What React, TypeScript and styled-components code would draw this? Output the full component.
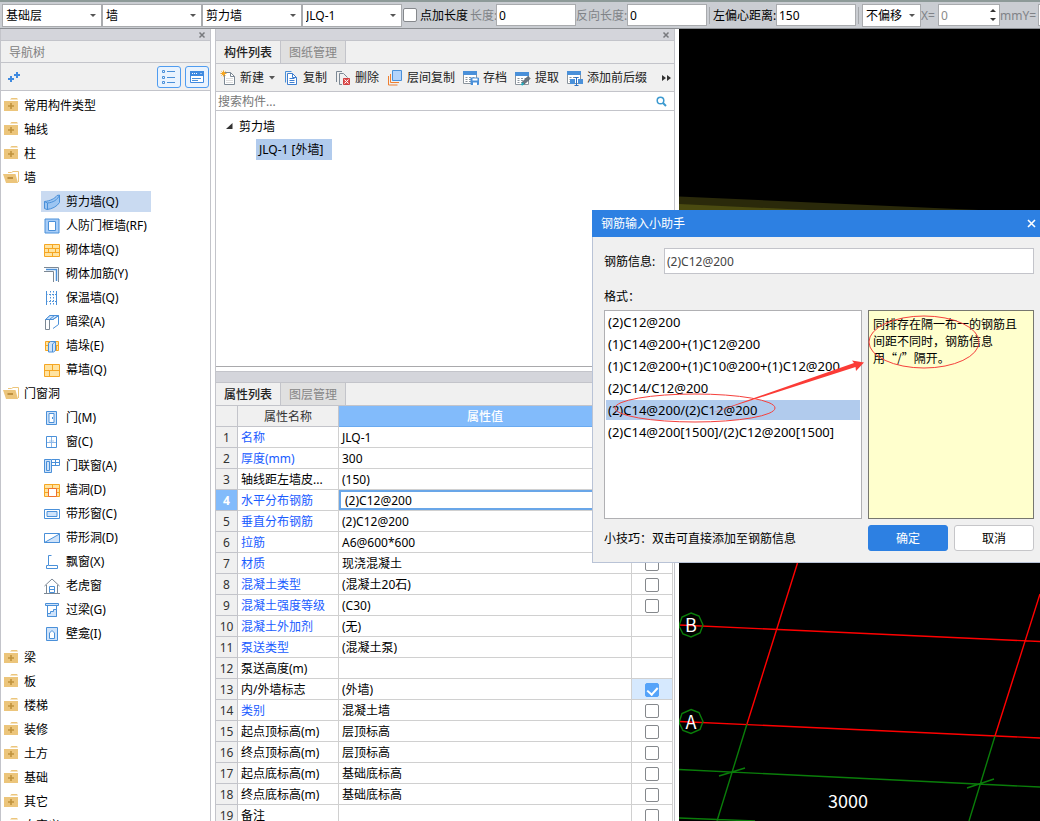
import React from 'react';
import styled, { createGlobalStyle } from 'styled-components';

const line = '#c3c4ca';
const blue = '#4a90d9';
const pale = '#cfe3fa';
const gold = '#f5a623';
const sand = '#ffe3a0';

const Global = createGlobalStyle`
  * { box-sizing: border-box; }
  body {
    margin: 0;
    background: #fff;
    color: #000;
    font: 12px/17px "Noto Sans", "Noto Sans CJK SC", sans-serif;
  }
  button, input, select { font: inherit; color: inherit; margin: 0; }
  ul { list-style: none; margin: 0; padding: 0; }
`;

/* ---------- page frame ---------- */

const Page = styled.div`
  position: relative;
  display: flex;
  flex-direction: column;
  height: 100vh;
  overflow: hidden;
`;

const TopBar = styled.div`
  flex: none;
  display: flex;
  align-items: center;
  height: 29px;
  padding-left: 2px;
  background: #cacdd2;
  border-top: 2px solid #8d9a98;
  border-bottom: 1px solid #8b8e92;
  overflow: hidden;
  white-space: nowrap;
`;

const Main = styled.div`
  flex: 1;
  min-height: 0;
  display: flex;
  gap: 4px;
`;

/* ---------- top bar controls ---------- */

const SelectBox = styled.div<{ $w: number }>`
  position: relative;
  flex: none;
  width: ${p => p.$w}px;
  &::after {
    content: '';
    position: absolute;
    right: 6px;
    top: 10px;
    border: 3px solid transparent;
    border-top-color: #555;
    pointer-events: none;
  }
  select {
    appearance: none;
    display: block;
    width: 100%;
    height: 23px;
    padding: 0 3px;
    border: 1px solid #a9abae;
    border-radius: 0;
    background: #fff;
  }
`;

const Drop = ({ w, value, label }: { w: number; value: string; label: string }) => (
  <SelectBox $w={w}>
    <select aria-label={label} defaultValue={value}><option>{value}</option></select>
  </SelectBox>
);

const Field = styled.input<{ $w: number; $dim?: boolean }>`
  flex: none;
  display: block;
  width: ${p => p.$w}px;
  height: 22px;
  padding: 0 2px;
  border: 1px solid #a9abae;
  background: #fff;
  color: ${p => (p.$dim ? '#8a8a8a' : '#000')};
`;

const BarLabel = styled.label<{ $w: number; $dim?: boolean }>`
  flex: none;
  width: ${p => p.$w}px;
  color: ${p => (p.$dim ? '#808387' : '#000')};
`;

const CheckLabel = styled.label`
  flex: none;
  display: flex;
  align-items: center;
  gap: 3px;
  width: 68px;
  padding-left: 1px;
`;

const Divider = styled.span`
  flex: none;
  width: 1px;
  height: 17px;
  margin: 0 3px 0 2px;
  background: #a5a8ac;
`;

const Spin = styled.span`
  position: relative;
  flex: none;
  &::before, &::after {
    content: '';
    position: absolute;
    right: 4px;
    border: 3px solid transparent;
  }
  &::before { top: 2px; border-bottom-color: #333; }
  &::after { bottom: 2px; border-top-color: #333; }
`;

const Check = styled.input`
  appearance: none;
  flex: none;
  display: block;
  width: 14px;
  height: 14px;
  border: 1px solid #85888c;
  border-radius: 2px;
  background: #fff;
  &:checked { background: #55a3f9; border-color: #55a3f9; }
  &:checked::after {
    content: '';
    display: block;
    width: 5px;
    height: 8px;
    margin: 1px auto 0;
    border: solid #fff;
    border-width: 0 2px 2px 0;
    transform: rotate(42deg);
  }
`;

/* ---------- shared panel parts ---------- */

const Strip = styled.div`
  flex: none;
  display: flex;
  justify-content: flex-end;
  align-items: center;
  height: 12px;
  padding-right: 4px;
  background: #d4d5db;
  border-bottom: 1px solid ${line};
`;

const StripClose = styled.button`
  display: flex;
  padding: 0;
  border: 0;
  background: none;
`;

const ClosableStrip = () => (
  <Strip>
    <StripClose aria-label="关闭面板">
      <svg width="8" height="8" viewBox="0 0 8 8" stroke="#77797d" strokeWidth="1.500"><path d="M1.500 1.500l5 5M6.500 1.500l-5 5" /></svg>
    </StripClose>
  </Strip>
);

const Tabs = styled.div`
  flex: none;
  display: flex;
  height: 23px;
  background: #f0f0f0;
  border-bottom: 1px solid ${line};
`;

const Tab = styled.button<{ $on?: boolean }>`
  width: 65px;
  padding: 0;
  border: 0;
  border-right: 1px solid ${line};
  background: ${p => (p.$on ? '#f0f0f0' : '#e0e0e0')};
  color: ${p => (p.$on ? '#222' : '#868686')};
  font-weight: ${p => (p.$on ? 500 : 400)};
`;

/* ---------- navigation tree ---------- */

const Nav = styled.aside`
  flex: none;
  display: flex;
  flex-direction: column;
  width: 211px;
  border: solid ${line};
  border-width: 0 1px;
  overflow: hidden;
`;

const NavTitle = styled.div`
  flex: none;
  height: 22px;
  padding: 3px 8px;
  background: #f0f0f0;
  border-bottom: 1px solid ${line};
  color: #808080;
`;

const NavTools = styled.div`
  flex: none;
  display: flex;
  align-items: center;
  gap: 4px;
  height: 28px;
  padding: 0 1px 0 6px;
  background: #f0f0f0;
  border-bottom: 1px solid ${line};
`;

const AddButton = styled.button`
  display: flex;
  margin-right: auto;
  padding: 0;
  border: 0;
  background: none;
`;

const ViewButton = styled.button`
  display: flex;
  align-items: center;
  justify-content: center;
  width: 24px;
  height: 22px;
  padding: 0;
  border: 1px solid #4f9cf0;
  border-radius: 3px;
  background: #e9f3fe;
`;

const NavList = styled.ul`
  display: flex;
  flex-direction: column;
  padding-top: 2px;
`;

const NavGroup = styled.li`
  flex: none;
  display: flex;
  align-items: center;
  gap: 4px;
  height: 24px;
  padding-left: 2px;
`;

const NavItem = styled.li<{ $on?: boolean }>`
  flex: none;
  display: flex;
  align-items: center;
  gap: 6px;
  width: 110px;
  height: 21px;
  margin: 2px 0 1px 40px;
  padding-left: 3px;
  background: ${p => (p.$on ? '#c9daf1' : 'transparent')};
  white-space: nowrap;
`;

const Icon = ({ children, w = 16 }: { children: React.ReactNode; w?: number }) => (
  <svg width={w} height="16" viewBox={`0 0 ${w} 16`} fill="none" stroke={blue}>{children}</svg>
);

const Folder = ({ open }: { open?: boolean }) =>
  open ? (
    <Icon w={17}>
      <path d="M0 5h12.500l2.500 9H3z" fill="#ecc57b" stroke="none" />
      <path d="M5 3.500h3.500L10 2.500h5.500v10.500" stroke="#ecc57b" />
      <path d="M4.500 9h5.500" stroke="#b07f2c" strokeWidth="1.500" />
    </Icon>
  ) : (
    <Icon w={17}>
      <path d="M1 4h14v10H1z" fill="#ecc57b" stroke="none" />
      <path d="M7 2.500L8.500 1H14l1 1.500z" fill="#ecc57b" stroke="none" />
      <path d="M8 6v6M5 9h6" stroke="#c0923d" strokeWidth="1.600" />
    </Icon>
  );

const Bricks = () => (
  <>
    <path d="M.5 2.500h15v12H.5z" fill={sand} stroke={gold} />
    <path d="M.5 6.500h15M.5 10.500h15M8.500 2.500v4M4.500 6.500v4M11.500 6.500v4M8.500 10.500v4" stroke={gold} />
  </>
);

const glyphs: Record<string, React.ReactNode> = {
  shear: <><path d="M.5 7.500C6 7 11 4.500 13 1.500l2.500-.5v7.500C13 12.500 8 15 3 15.500l-2.500-1z" fill="#9cc5f2" /><path d="M.5 7.500l3 1.500C9 8.500 13.500 6 15.500 1M3.500 9v6.500" /></>,
  frame: <><path d="M1 1h14v14H1z" fill="#a8cdf7" /><path d="M4.500 3.500h7v9h-7z" fill="#fff" /></>,
  brick: <Bricks />,
  rebar: <><path d="M0 1.500h14.500V16M0 5.500h9.500V16" stroke="#7c8894" /><path d="M2 3.500h10.500V15" strokeWidth="1.500" /></>,
  insul: <><path d="M2.500 1v14M12.500 1v14" /><path d="M6.500 1v14M9.500 1v14M2 4.500h11M2 11.500h11" strokeDasharray="1.500 1.500" /></>,
  hidden: <><path d="M1.500 5.500L6 1.500h8.500v9L9 14.500" fill="#fff" /><path d="M1.500 5.500h4v10h-4z" fill="#fff" stroke="#7c8894" /><path d="M1.500 5.500L6 1.500h8.500L9 5.500z" fill={pale} /><path d="M5.500 5.500l5-4M5.500 5.500H9L14 2" /></>,
  pier: <><path d="M1.500 3.500h13v9h-13z" fill={sand} stroke={gold} /><path d="M1 7.500h14M4.500 3v5M12.500 8v4" stroke={gold} /><path d="M4.500 5.500l2-2h5v9l-2 1.500h-5z" fill={pale} /><path d="M8.500 14V6l3-2.500" /></>,
  curtain: <><path d="M.5 2.500h15v12H.5z" fill={sand} stroke={gold} /><path d="M.5 8.500h15M8.500 2.500v6M5.500 8.500v6" stroke={gold} /></>,
  door: <><path d="M2.500 1.500h10v13h-10z" fill={pale} /><path d="M5 3.500h5v9H5z" fill="#fff" /><path d="M8.500 7v2" /></>,
  window: <><path d="M2.500 2.500h10v11h-10z" fill="#fff" /><path d="M7.500 3v10M3 8.500h9" stroke="#8db8e8" /><path d="M6 6.500v1M9 6.500v1" /></>,
  doorwin: <><path d="M.5 1.500h7v13h-7z" fill={pale} /><path d="M2.500 3.500h3v9h-3zM8 1.500h7.500v6H8M11.500 1v7M8 4.500h8" /></>,
  hole: <><Bricks /><path d="M4.500 6.500h8v8h-8z" fill="#fff" stroke="#ee7030" /></>,
  strip: <><path d="M.5 3.500h15v9H.5z" fill="#fff" /><path d="M3 5.500h10v5H3z" fill={pale} /></>,
  striphole: <><path d="M.5 3.500h15v9H.5z" fill="#fff" /><path d="M.5 12.500L15.500 4v8.500z" fill={pale} /></>,
  bay: <path d="M7.500 1.500h-3v10h-2v3h11v-3H5" />,
  dormer: <><path d="M.5 8L8 1l7.500 7M2.500 7v8.500M13.500 7v8.500M0 15.500h16" stroke="#7c8894" /><path d="M5.500 8.500h5v6h-5zM5.500 11.500h5" /></>,
  lintel: <><path d="M1.500 1.500h13v2h-13z" fill={pale} /><path d="M3.500 4v10.500h9V4" /><path d="M3.500 11.500h3v-2h3v-2h3v7h-9z" fill={pale} /></>,
  niche: <><path d="M2.500 1.500h11v13h-11z" fill={pale} /><path d="M5.500 12.500V7L8 4.500 10.500 7v5.500z" fill="#fff" /></>,
};

type Group = { name: string; open?: boolean; items?: [string, string][] };

const groups: Group[] = [
  { name: '常用构件类型' },
  { name: '轴线' },
  { name: '柱' },
  {
    name: '墙', open: true, items: [
      ['shear', '剪力墙(Q)'], ['frame', '人防门框墙(RF)'], ['brick', '砌体墙(Q)'], ['rebar', '砌体加筋(Y)'],
      ['insul', '保温墙(Q)'], ['hidden', '暗梁(A)'], ['pier', '墙垛(E)'], ['curtain', '幕墙(Q)'],
    ],
  },
  {
    name: '门窗洞', open: true, items: [
      ['door', '门(M)'], ['window', '窗(C)'], ['doorwin', '门联窗(A)'], ['hole', '墙洞(D)'], ['strip', '带形窗(C)'],
      ['striphole', '带形洞(D)'], ['bay', '飘窗(X)'], ['dormer', '老虎窗'], ['lintel', '过梁(G)'], ['niche', '壁龛(I)'],
    ],
  },
  { name: '梁' }, { name: '板' }, { name: '楼梯' }, { name: '装修' }, { name: '土方' }, { name: '基础' }, { name: '其它' }, { name: '自定义' },
];

/* ---------- component list ---------- */

const Middle = styled.section`
  flex: none;
  display: flex;
  flex-direction: column;
  width: 460px;
  border: solid ${line};
  border-width: 0 1px;
  overflow: hidden;
`;

const Tools = styled.div`
  flex: none;
  display: flex;
  align-items: center;
  gap: 8px;
  height: 28px;
  padding: 0 3px 0 4px;
  background: #f0f0f0;
  border-bottom: 1px solid ${line};
`;

const Tool = styled.button`
  flex: none;
  display: flex;
  align-items: center;
  gap: 4px;
  padding: 0;
  border: 0;
  background: none;
  color: #222;
`;

const More = styled(Tool)`
  margin-left: auto;
`;

const Search = styled.label`
  flex: none;
  display: flex;
  align-items: center;
  height: 19px;
  padding-right: 7px;
  border-bottom: 1px solid ${line};
  input {
    flex: 1;
    padding: 0 2px;
    border: 0;
    outline: 0;
    background: none;
  }
  input::placeholder { color: #777; opacity: 1; }
`;

const Tree = styled.div`
  flex: none;
  height: 256px;
  padding-top: 3px;
  border-bottom: 1px solid #a9a9ac;
`;

const TreeNode = styled.div`
  display: flex;
  align-items: center;
  gap: 6px;
  height: 24px;
  padding-left: 10px;
`;

const TreeLeaf = styled.div`
  width: 76px;
  height: 21px;
  margin: 1px 0 0 40px;
  padding: 2px 3px;
  background: #b1cbed;
  white-space: nowrap;
`;

const LowerStrip = styled(Strip)`
  margin-top: 4px;
  border-top: 1px solid ${line};
`;

/* ---------- property table ---------- */

const Props = styled.table`
  width: 457px;
  table-layout: fixed;
  border-collapse: separate;
  border-spacing: 0;
  white-space: nowrap;
  th, td {
    height: 21px;
    padding: 2px 3px 1px;
    border: solid #d0d0d0;
    border-width: 0 1px 1px 0;
    text-align: left;
    font-weight: 400;
    overflow: hidden;
  }
  thead th { background: #f0f0f0; color: #333; text-align: center; border-color: ${line}; }
`;

const ValueHead = styled.th`
  && { background: #82bbfb; color: #fff; font-weight: 500; border-color: #6aaaf0; }
`;

const Num = styled.th<{ $on?: boolean }>`
  && {
    padding: 2px 0 1px;
    text-align: center;
    background: ${p => (p.$on ? '#82bbfb' : '#f0f0f0')};
    color: ${p => (p.$on ? '#fff' : '#333')};
    font-weight: ${p => (p.$on ? 700 : 400)};
    border-color: ${line};
  }
`;

const Name = styled.td<{ $link: boolean }>`
  color: ${p => (p.$link ? '#1a5cff' : '#000')};
`;

const EditCell = styled.td`
  && { padding: 0; }
  input {
    display: block;
    width: 100%;
    height: 20px;
    padding: 0 4px;
    border: 2px solid #69a6e8;
    outline: 0;
  }
`;

const Extra = styled.td<{ $on?: boolean }>`
  background: ${p => (p.$on ? '#d6e9fe' : '#fff')};
  input { margin: 0 auto; }
`;

type Prop = [name: string, value: string, link: boolean, check: 0 | 1 | 2];

const props: Prop[] = [
  ['名称', 'JLQ-1', true, 0],
  ['厚度(mm)', '300', true, 1],
  ['轴线距左墙皮...', '(150)', false, 1],
  ['水平分布钢筋', '(2)C12@200', true, 1],
  ['垂直分布钢筋', '(2)C12@200', true, 1],
  ['拉筋', 'A6@600*600', true, 1],
  ['材质', '现浇混凝土', true, 1],
  ['混凝土类型', '(混凝土20石)', true, 1],
  ['混凝土强度等级', '(C30)', true, 1],
  ['混凝土外加剂', '(无)', true, 0],
  ['泵送类型', '(混凝土泵)', true, 0],
  ['泵送高度(m)', '', false, 0],
  ['内/外墙标志', '(外墙)', false, 2],
  ['类别', '混凝土墙', true, 1],
  ['起点顶标高(m)', '层顶标高', false, 1],
  ['终点顶标高(m)', '层顶标高', false, 1],
  ['起点底标高(m)', '基础底标高', false, 1],
  ['终点底标高(m)', '基础底标高', false, 1],
  ['备注', '', false, 1],
];

/* ---------- drawing area ---------- */

const Canvas = styled.main`
  flex: 1;
  min-width: 0;
  background: #000;
  overflow: hidden;
  svg { display: block; width: 100%; height: 100%; }
  text { fill: #fff; font-family: "Noto Sans CJK SC", sans-serif; font-size: 18px; text-anchor: middle; }
`;

const Drawing = () => (
  <svg fill="none" strokeWidth="1.400" aria-label="轴网">
    <path d="M0 167.500l300 13.500v8H0z" fill="#2a290a" />
    <path d="M0 175l130 6v8H0z" fill="#4a4a10" />
    <path d="M0 596l361 16.500M0 692.500L361 709M118.500 534L68 695M361 565l-45 142" stroke="#f00" />
    <path d="M68 695L38 792M316 707l-26 85M0 740.500L361 758M40 747l26-8M288 759l27-9M0 789l76 3" stroke="#0a7d0a" />
    <path d="M12 584l8 3 4 9-3 8-9 4-8-3-4-8 3-9z" stroke="#0a7d0a" />
    <path d="M12 680.500l8 3 4 9-3 8-9 4-8-3-4-8 3-9z" stroke="#0a7d0a" />
    <text x="12" y="603">B</text>
    <text x="12" y="700">A</text>
    <text x="169" y="779">3000</text>
  </svg>
);

/* ---------- dialog ---------- */

const Dialog = styled.div`
  position: absolute;
  top: 210px;
  right: 0;
  width: 448px;
  background: #f0f0f0;
  border: solid #b9c3d6;
  border-width: 0 0 1px 1px;
`;

const DialogTitle = styled.div`
  display: flex;
  align-items: center;
  justify-content: space-between;
  height: 27px;
  margin-left: -1px;
  padding: 0 4px 0 9px;
  background: #2d80e2;
  color: #fff;
`;

const DialogClose = styled.button`
  display: flex;
  padding: 0;
  border: 0;
  background: none;
`;

const DialogBody = styled.div`
  display: flex;
  flex-direction: column;
  padding: 11px 6px 11px 11px;
`;

const InfoRow = styled.label`
  display: flex;
  align-items: center;
  gap: 8px;
  span { width: 52px; }
  input {
    flex: 1;
    height: 26px;
    padding: 0 2px;
    border: 1px solid ${line};
    background: #fff;
    color: #444;
  }
`;

const FormatLabel = styled.div`
  margin: 14px 0 5px;
`;

const Columns = styled.div`
  display: grid;
  grid-template-columns: 1fr 166px;
  gap: 6px;
`;

const FormatList = styled.ul`
  display: flex;
  flex-direction: column;
  gap: 2px;
  height: 209px;
  padding: 1px;
  border: 1px solid #b0b0b3;
  background: #fff;
  font-size: 13px;
`;

const Format = styled.li<{ $on?: boolean }>`
  height: 20px;
  padding: 2px;
  line-height: 17px;
  background: ${p => (p.$on ? '#b1cbed' : 'transparent')};
`;

const Tip = styled.div`
  padding: 4px;
  border: 1px solid #77776f;
  background: #ffffcd;
  font-family: "Noto Sans CJK SC", sans-serif;
  line-height: 17px;
`;

const Footer = styled(Columns)`
  align-items: center;
  margin-top: 6px;
`;

const Buttons = styled.div`
  display: grid;
  grid-template-columns: 1fr 1fr;
  gap: 6px;
`;

const Action = styled.button<{ $primary?: boolean }>`
  height: 26px;
  padding: 0;
  border: 1px solid ${p => (p.$primary ? '#2d80e2' : '#c6c6c9')};
  border-radius: 3px;
  background: ${p => (p.$primary ? '#2d80e2' : '#fff')};
  color: ${p => (p.$primary ? '#fff' : '#000')};
`;

const Marks = styled.svg`
  position: absolute;
  top: 0;
  left: 0;
  pointer-events: none;
`;

const formats = [
  '(2)C12@200',
  '(1)C14@200+(1)C12@200',
  '(1)C12@200+(1)C10@200+(1)C12@200',
  '(2)C14/C12@200',
  '(2)C14@200/(2)C12@200',
  '(2)C14@200[1500]/(2)C12@200[1500]',
];

const Sheet = () => (
  <>
    <path d="M.5 2.500h13v11H.5z" fill="#fff" stroke="#8b949c" />
    <path d="M0 1h14v4H0z" fill={blue} stroke="none" />
    <path d="M2.500 7.500h2M6 7.500h2M9.500 7.500h2M2.500 9.500h2M6 9.500h2M2.500 11.500h2M6 11.500h2" stroke="#8b949c" />
  </>
);

export default function App() {
  return (
    <Page>
      <Global />
      <TopBar>
        <Drop w={100} value="基础层" label="楼层" />
        <Drop w={100} value="墙" label="类别" />
        <Drop w={100} value="剪力墙" label="构件类型" />
        <Drop w={100} value="JLQ-1" label="构件" />
        <CheckLabel><Check type="checkbox" />点加长度</CheckLabel>
        <BarLabel $w={26} $dim htmlFor="len">长度:</BarLabel>
        <Field $w={80} id="len" defaultValue="0" />
        <BarLabel $w={51} $dim htmlFor="rev">反向长度:</BarLabel>
        <Field $w={80} id="rev" defaultValue="0" />
        <Divider />
        <BarLabel $w={63} htmlFor="ecc">左偏心距离:</BarLabel>
        <Field $w={80} id="ecc" defaultValue="150" />
        <Divider />
        <Drop w={59} value="不偏移" label="偏移方式" />
        <BarLabel $w={17} $dim htmlFor="dx">X=</BarLabel>
        <Spin><Field $w={62} $dim id="dx" defaultValue="0" /></Spin>
        <BarLabel $w={38} $dim htmlFor="dy">mmY=</BarLabel>
        <Spin><Field $w={62} $dim id="dy" defaultValue="0" /></Spin>
      </TopBar>

      <Main>
        <Nav>
          <ClosableStrip />
          <NavTitle>导航树</NavTitle>
          <NavTools>
            <AddButton aria-label="添加">
              <svg width="14" height="14" viewBox="0 0 14 14" stroke="#3f8ae0" strokeWidth="2"><path d="M4 6v6M1 9h6M10 2v6M7 5h6" /></svg>
            </AddButton>
            <ViewButton aria-label="列表视图">
              <Icon><path d="M1.500 1.500h2v2h-2zM1.500 7.500h2v2h-2zM1.500 12.500h2v2h-2zM6 2.500h8M6 8.500h8M6 13.500h8" /></Icon>
            </ViewButton>
            <ViewButton aria-label="窗口视图">
              <Icon><path d="M1.500 2.500h13v11h-13z" fill="#fff" stroke="#3f8ae0" /><path d="M1 2h14v5H1z" fill="#3f8ae0" stroke="none" /><path d="M3 4.500h6M11.500 4.500h2" stroke="#fff" strokeDasharray="1 1" /><path d="M3 9.500h9M3 11.500h6" /></Icon>
            </ViewButton>
          </NavTools>
          <NavList>
            {groups.map(g => (
              <React.Fragment key={g.name}>
                <NavGroup><Folder open={g.open} />{g.name}</NavGroup>
                {g.items?.map(([icon, label]) => (
                  <NavItem key={label} $on={icon === 'shear'}><Icon>{glyphs[icon]}</Icon>{label}</NavItem>
                ))}
              </React.Fragment>
            ))}
          </NavList>
        </Nav>

        <Middle>
          <ClosableStrip />
          <Tabs><Tab $on>构件列表</Tab><Tab>图纸管理</Tab></Tabs>
          <Tools>
            <Tool>
              <Icon><path d="M4.500 2.500h6l4 4v8h-10z" fill="#fff" stroke="#7c8894" /><path d="M10.500 2.500v4h4" stroke="#7c8894" /><path d="M6 8.500h7M6 10.500h7M6 12.500h7" stroke="#dcdcdc" /><path d="M3.500.5v6M.5 3.500h6M1.500 1.500l4 4M5.500 1.500l-4 4" stroke={gold} /></Icon>
              新建
              <svg width="7" height="4" viewBox="0 0 7 4"><path d="M1 0h6L4 3.500z" fill="#555" /></svg>
            </Tool>
            <Tool>
              <Icon><path d="M2.500 12.500v-11h6" /><path d="M4.500 14.500v-11h5l4 4v7z" fill="#fff" stroke="#3f7fd0" /><path d="M9.500 3.500v4h4M6.500 8.500h5M6.500 10.500h5M6.500 12.500h5" stroke="#3f7fd0" /></Icon>
              复制
            </Tool>
            <Tool>
              <Icon><path d="M1.500 12V1.500H7M7 14.500H4.500v-11h4l4 4" stroke="#7c8894" /><path d="M8.500 8.500h6v6h-6z" fill="#e05252" stroke="#d04040" /><path d="M9.500 9.500l4 4M13.500 9.500l-4 4" stroke="#fff" /></Icon>
              删除
            </Tool>
            <Tool>
              <Icon><path d="M1.500 6v9h9M3.500 4v8.500H12" stroke="#ee7f30" /><path d="M5.500.5h9v10h-9z" fill="#b3d3fb" /></Icon>
              层间复制
            </Tool>
            <Tool>
              <Icon><Sheet /><path d="M8 8h7.500v6.500H8z" fill={blue} /><path d="M9.500 8.500h5v2h-5zM10 12.500h4V15h-4z" fill="#fff" stroke="none" /></Icon>
              存档
            </Tool>
            <Tool>
              <Icon><g transform="translate(0 1)"><Sheet /></g><path d="M7 14.500l1-3 5-5 2 2-5 5z" fill="#6b7680" stroke="#55606a" /><path d="M6.500 15l2-2" stroke="#20b0c0" strokeWidth="2" /></Icon>
              提取
            </Tool>
            <Tool>
              <Icon><Sheet /><path d="M3 9h5v5H3zM11 9h5v5h-5z" fill={blue} stroke="none" /><path d="M9.500 7v9M7.500 7.500h4M7.500 15.500h4" stroke="#2d6fc0" /></Icon>
              添加前后缀
            </Tool>
            <More aria-label="更多">
              <svg width="9" height="6" viewBox="0 0 9 6" fill="#333"><path d="M0 0l4 3-4 3zM5 0l4 3-4 3z" /></svg>
            </More>
          </Tools>
          <Search>
            <input aria-label="搜索构件" placeholder="搜索构件..." />
            <svg width="11" height="11" viewBox="0 0 11 11" fill="none" stroke="#3c9ad0"><circle cx="4.500" cy="4.500" r="3.300" strokeWidth="1.500" /><path d="M7 7l3 3" strokeWidth="2" /></svg>
          </Search>
          <Tree>
            <TreeNode>
              <svg width="7" height="6" viewBox="0 0 7 6"><path d="M6.500 0v6H0z" fill="#333" /></svg>
              剪力墙
            </TreeNode>
            <TreeLeaf>JLQ-1 [外墙]</TreeLeaf>
          </Tree>

          <LowerStrip />
          <Tabs><Tab $on>属性列表</Tab><Tab>图层管理</Tab></Tabs>
          <Props>
            <colgroup>
              <col style={{ width: 22 }} />
              <col style={{ width: 101 }} />
              <col />
              <col style={{ width: 41 }} />
            </colgroup>
            <thead>
              <tr><th aria-label="序号" /><th>属性名称</th><ValueHead>属性值</ValueHead><th>附加</th></tr>
            </thead>
            <tbody>
              {props.map(([name, value, link, check], i) => (
                <tr key={name}>
                  <Num $on={i === 3}>{i + 1}</Num>
                  <Name $link={link}>{name}</Name>
                  {i === 3 ? <EditCell><input aria-label={name} defaultValue={value} /></EditCell> : <td>{value}</td>}
                  <Extra $on={check === 2}>
                    {check > 0 && <Check type="checkbox" aria-label={`附加 ${name}`} defaultChecked={check === 2} />}
                  </Extra>
                </tr>
              ))}
            </tbody>
          </Props>
        </Middle>

        <Canvas><Drawing /></Canvas>
      </Main>

      <Dialog role="dialog" aria-label="钢筋输入小助手">
        <DialogTitle>
          钢筋输入小助手
          <DialogClose aria-label="关闭">
            <svg width="9" height="9" viewBox="0 0 9 9" stroke="#fff" strokeWidth="1.600"><path d="M1 1l7 7M8 1L1 8" /></svg>
          </DialogClose>
        </DialogTitle>
        <DialogBody>
          <InfoRow><span>钢筋信息:</span><input defaultValue="(2)C12@200" /></InfoRow>
          <FormatLabel>格式：</FormatLabel>
          <Columns>
            <FormatList>
              {formats.map((f, i) => <Format key={f} $on={i === 4}>{f}</Format>)}
            </FormatList>
            <Tip>同排存在隔一布一的钢筋且<br />间距不同时，钢筋信息<br />用“/”隔开。</Tip>
          </Columns>
          <Footer>
            <span>小技巧：双击可直接添加至钢筋信息</span>
            <Buttons><Action $primary>确定</Action><Action>取消</Action></Buttons>
          </Footer>
        </DialogBody>
        <Marks width="448" height="353" fill="none" stroke="#f5403c">
          <ellipse cx="102" cy="198" rx="80" ry="14" />
          <ellipse cx="331" cy="132" rx="55" ry="26" />
          <path d="M117 203.500L261 153l-2-2.500 12 2-8 8.500-.5-4z" fill="#fb3b36" stroke="none" />
        </Marks>
      </Dialog>
    </Page>
  );
}
